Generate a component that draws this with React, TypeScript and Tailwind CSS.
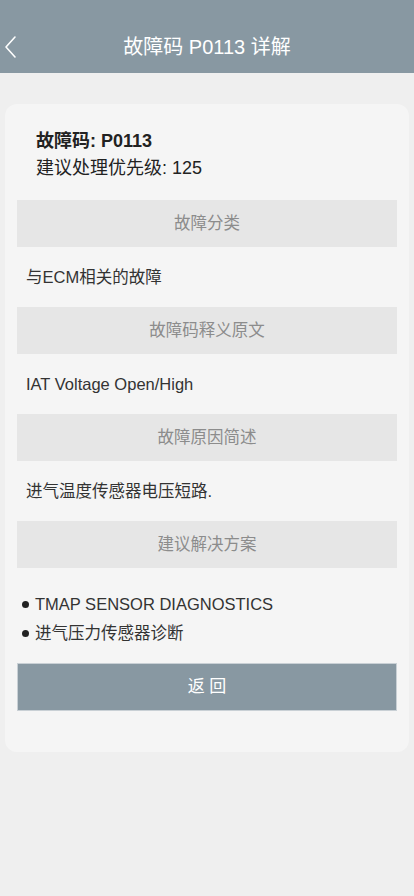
const font = { fontFamily: '"Liberation Sans", "Noto Sans CJK SC", sans-serif' };

function SectionTitle({ children }: { children: React.ReactNode }) {
  return (
    <div className="h-[47px] bg-[#e6e6e6] flex items-center justify-center text-[16.5px] text-[#8c8c8c]">
      {children}
    </div>
  );
}

function SectionText({ children }: { children: React.ReactNode }) {
  return <div className="h-[60px] flex items-center px-[9px] text-[16.5px] text-[#333]">{children}</div>;
}

export default function App() {
  const solutions = ["TMAP SENSOR DIAGNOSTICS", "进气压力传感器诊断"];

  return (
    <div className="min-h-[896px] bg-[#efefef]" style={font}>
      <header className="h-[73px] bg-[#8898a2] relative flex items-end justify-center pb-[14px]">
        <button type="button" className="absolute left-0 bottom-[14px] w-[20px] h-[24px] flex items-center justify-center" aria-label="返回">
          <svg width="14" height="24" viewBox="0 0 14 24" fill="none" stroke="white" strokeWidth={1.6} strokeLinecap="round" strokeLinejoin="round">
            <path d="M12 2 L3 12 L12 22" />
          </svg>
        </button>
        <span className="text-white text-[20px] leading-[24px]">故障码 P0113 详解</span>
      </header>

      <div className="px-[5px] pt-[31px]">
        <div className="bg-[#f5f5f5] rounded-[12px] px-[12px] pt-[24px] pb-[41px]">
          <div className="px-[19px] text-[#222] pb-[18px]">
            <div className="text-[18px] font-bold leading-[26px]">故障码: P0113</div>
            <div className="text-[18px] leading-[28px]">建议处理优先级: 125</div>
          </div>

          <SectionTitle>故障分类</SectionTitle>
          <SectionText>与ECM相关的故障</SectionText>

          <SectionTitle>故障码释义原文</SectionTitle>
          <SectionText>IAT Voltage Open/High</SectionText>

          <SectionTitle>故障原因简述</SectionTitle>
          <SectionText>进气温度传感器电压短路.</SectionText>

          <SectionTitle>建议解决方案</SectionTitle>
          <ul className="pt-[22px] pb-[15px] px-[5px]">
            {solutions.map((s) => (
              <li key={s} className="h-[29px] flex items-center gap-[6px] text-[16.5px] text-[#333]">
                <span className="w-[7px] h-[7px] rounded-full bg-[#222] shrink-0" />
                {s}
              </li>
            ))}
          </ul>

          <button type="button" className="w-full h-[48px] bg-[#8898a2] text-white text-[17px] border border-[#c9d0d5]">
            返 回
          </button>
        </div>
      </div>
    </div>
  );
}
